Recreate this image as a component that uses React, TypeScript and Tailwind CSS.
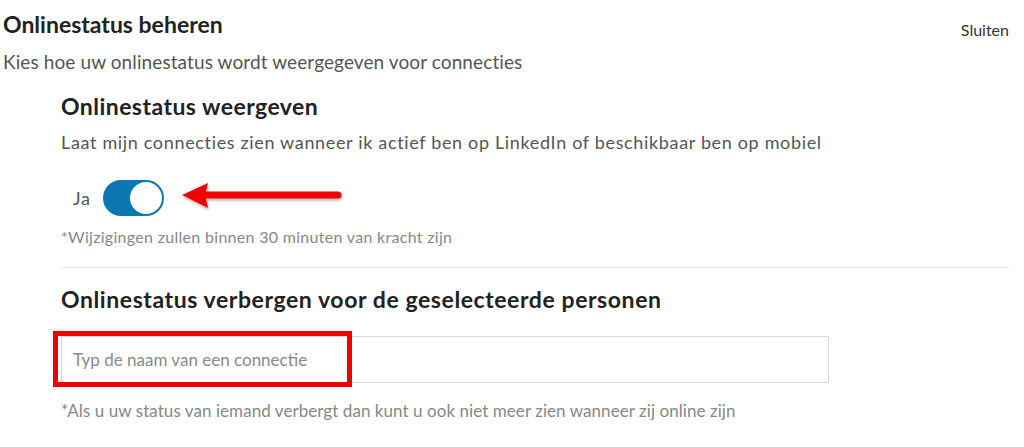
import { FC } from "react";

const Arrow: FC = () => (
  <svg width="164" height="34" viewBox="0 0 164 34" className="ml-[16px] mt-[-4px]">
    <defs>
      <filter id="sh" x="-10%" y="-40%" width="120%" height="180%">
        <feDropShadow dx="1" dy="2" stdDeviation="1.5" floodColor="#000" floodOpacity="0.3" />
      </filter>
    </defs>
    <g filter="url(#sh)">
      <line x1="26" y1="16" x2="158" y2="16" stroke="#f40000" strokeWidth="7" strokeLinecap="round" />
      <polygon points="2,16 28,4 25,16 28,29" fill="#f40000" />
    </g>
  </svg>
);

const Toggle: FC = () => (
  <div className="flex h-[36px] w-[61px] items-center justify-end rounded-full bg-[#0b77b3] p-[2px]">
    <div className="h-[32px] w-[32px] rounded-full bg-white" />
  </div>
);

export default function App() {
  return (
    <div className="min-h-[447px] bg-white pl-[3px] pr-[15px] font-['Lato','Liberation_Sans',sans-serif]">
      <div className="flex items-start justify-between pt-[9px]">
        <h1 className="text-[23px] font-bold leading-[30px] text-[#222]">Onlinestatus beheren</h1>
        <button className="mt-[9px] text-[16px] leading-[24px] text-[#333]">Sluiten</button>
      </div>
      <p className="mt-[8px] text-[19px] leading-[24px] tracking-[0.1px] text-[#555]">
        Kies hoe uw onlinestatus wordt weergegeven voor connecties
      </p>

      <div className="ml-[58px]">
        <h2 className="mt-[18px] text-[23px] font-bold leading-[28px] tracking-[0.45px] text-[#222]">
          Onlinestatus weergeven
        </h2>
        <p className="mt-[10px] text-[18px] leading-[24px] tracking-[0.66px] text-[#555]">
          Laat mijn connecties zien wanneer ik actief ben op LinkedIn of beschikbaar ben op mobiel
        </p>
        <div className="mt-[26px] flex items-center pl-[12px]">
          <span className="mr-[12px] text-[18px] leading-[24px] tracking-[0.8px] text-[#555]">Ja</span>
          <Toggle />
          <Arrow />
        </div>
        <p className="mt-[11px] text-[16px] leading-[20px] tracking-[0.3px] text-[#888]">
          *Wijzigingen zullen binnen 30 minuten van kracht zijn
        </p>
        <div className="mt-[20px] h-px bg-[#e6e6e6]" />
        <h2 className="mt-[17px] text-[23px] font-bold leading-[28px] tracking-[0.58px] text-[#222]">
          Onlinestatus verbergen voor de geselecteerde personen
        </h2>
        <div className="relative mt-[23px] w-[768px]">
          <input
            placeholder="Typ de naam van een connectie"
            className="h-[47px] w-full border border-[#d9d9d9] px-[11px] text-[17px] text-[#333] outline-none placeholder:text-[#8a8a8a]"
          />
          <div className="pointer-events-none absolute left-[-8px] top-[-5px] h-[56px] w-[299px] border-[5px] border-[#f00000]" />
        </div>
        <p className="mt-[18px] text-[17px] leading-[20px] tracking-[0.06px] text-[#888]">
          *Als u uw status van iemand verbergt dan kunt u ook niet meer zien wanneer zij online zijn
        </p>
      </div>
    </div>
  );
}
